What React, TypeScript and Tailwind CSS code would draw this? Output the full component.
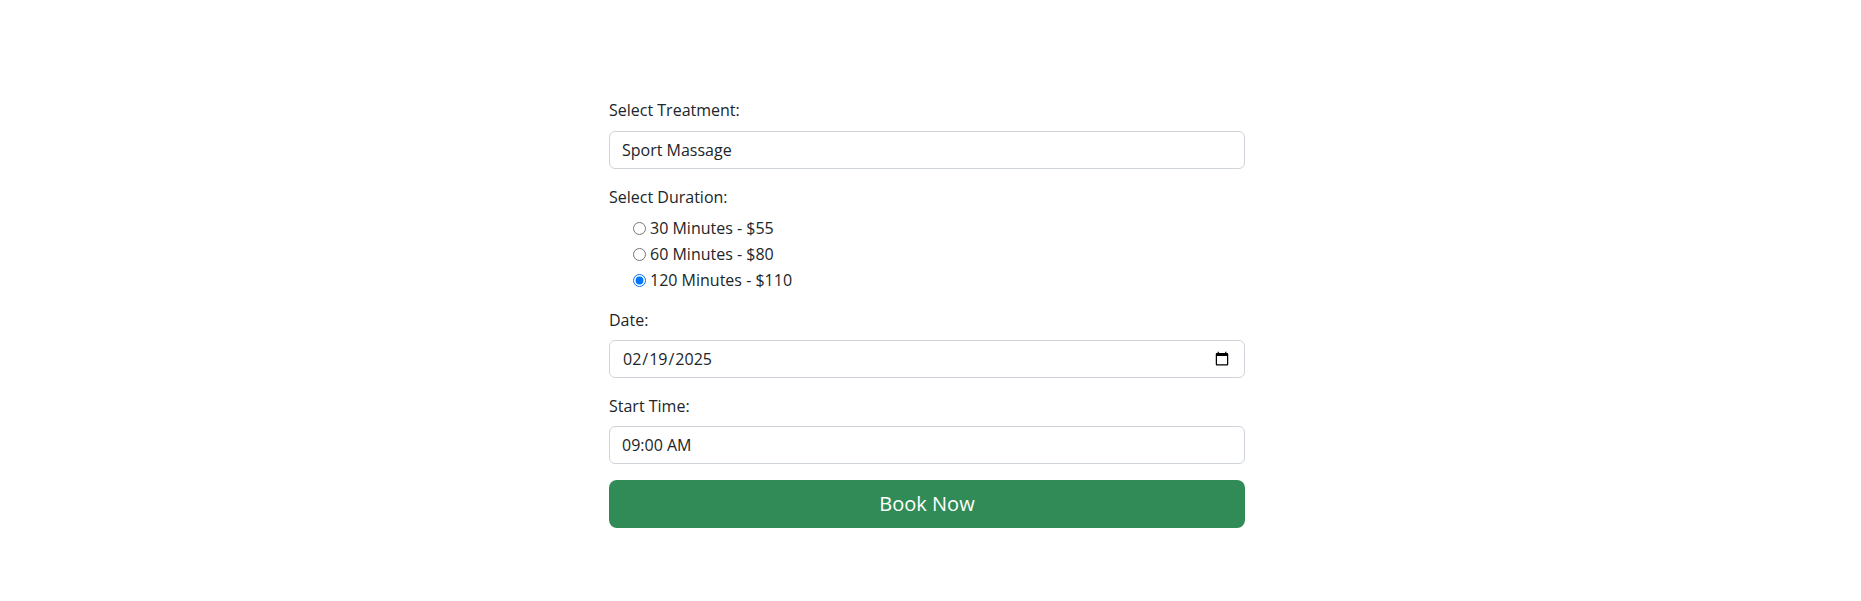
import { useState } from 'react';

const durations = [
  { id: '30', label: '30 Minutes - $55' },
  { id: '60', label: '60 Minutes - $80' },
  { id: '120', label: '120 Minutes - $110' },
];

function App() {
  const [duration, setDuration] = useState('120');

  const inputClass =
    'block w-full h-[38px] px-3 text-base leading-6 text-[#212529] bg-white border border-[#ced4da] rounded-[6px] outline-none';

  return (
    <div
      className="min-h-screen bg-white flex justify-center pr-[7px] pt-[98px] text-[#212529]"
      style={{ fontFamily: '"Open Sans", "Noto Sans", sans-serif' }}
    >
      <form className="w-[636px]" onSubmit={(e) => e.preventDefault()}>
        <div className="mb-4">
          <label className="block mb-[9px] text-base leading-6">Select Treatment:</label>
          <input className={inputClass} type="text" defaultValue="Sport Massage" readOnly />
        </div>

        <div className="mb-4">
          <label className="block mb-[7px] text-base leading-6">Select Duration:</label>
          <div className="pl-[24px]">
            {durations.map((d) => (
              <label key={d.id} className="flex items-center h-6 mb-[2px] text-base leading-6">
                <input
                  type="radio"
                  name="duration"
                  className="m-0 mr-[4px] w-[13px] h-[13px]"
                  checked={duration === d.id}
                  onChange={() => setDuration(d.id)}
                />
                {d.label}
              </label>
            ))}
          </div>
        </div>

        <div className="mb-4">
          <label className="block mb-2 text-base leading-6">Date:</label>
          <input className={inputClass} type="date" defaultValue="2025-02-19" />
        </div>

        <div className="mb-4">
          <label className="block mb-2 text-base leading-6">Start Time:</label>
          <input className={inputClass} type="text" defaultValue="09:00 AM" readOnly />
        </div>

        <button
          type="submit"
          className="block w-full h-12 rounded-[8px] bg-[#318b57] text-white text-xl leading-[30px]"
        >
          Book Now
        </button>
      </form>
    </div>
  );
}

export default App;
